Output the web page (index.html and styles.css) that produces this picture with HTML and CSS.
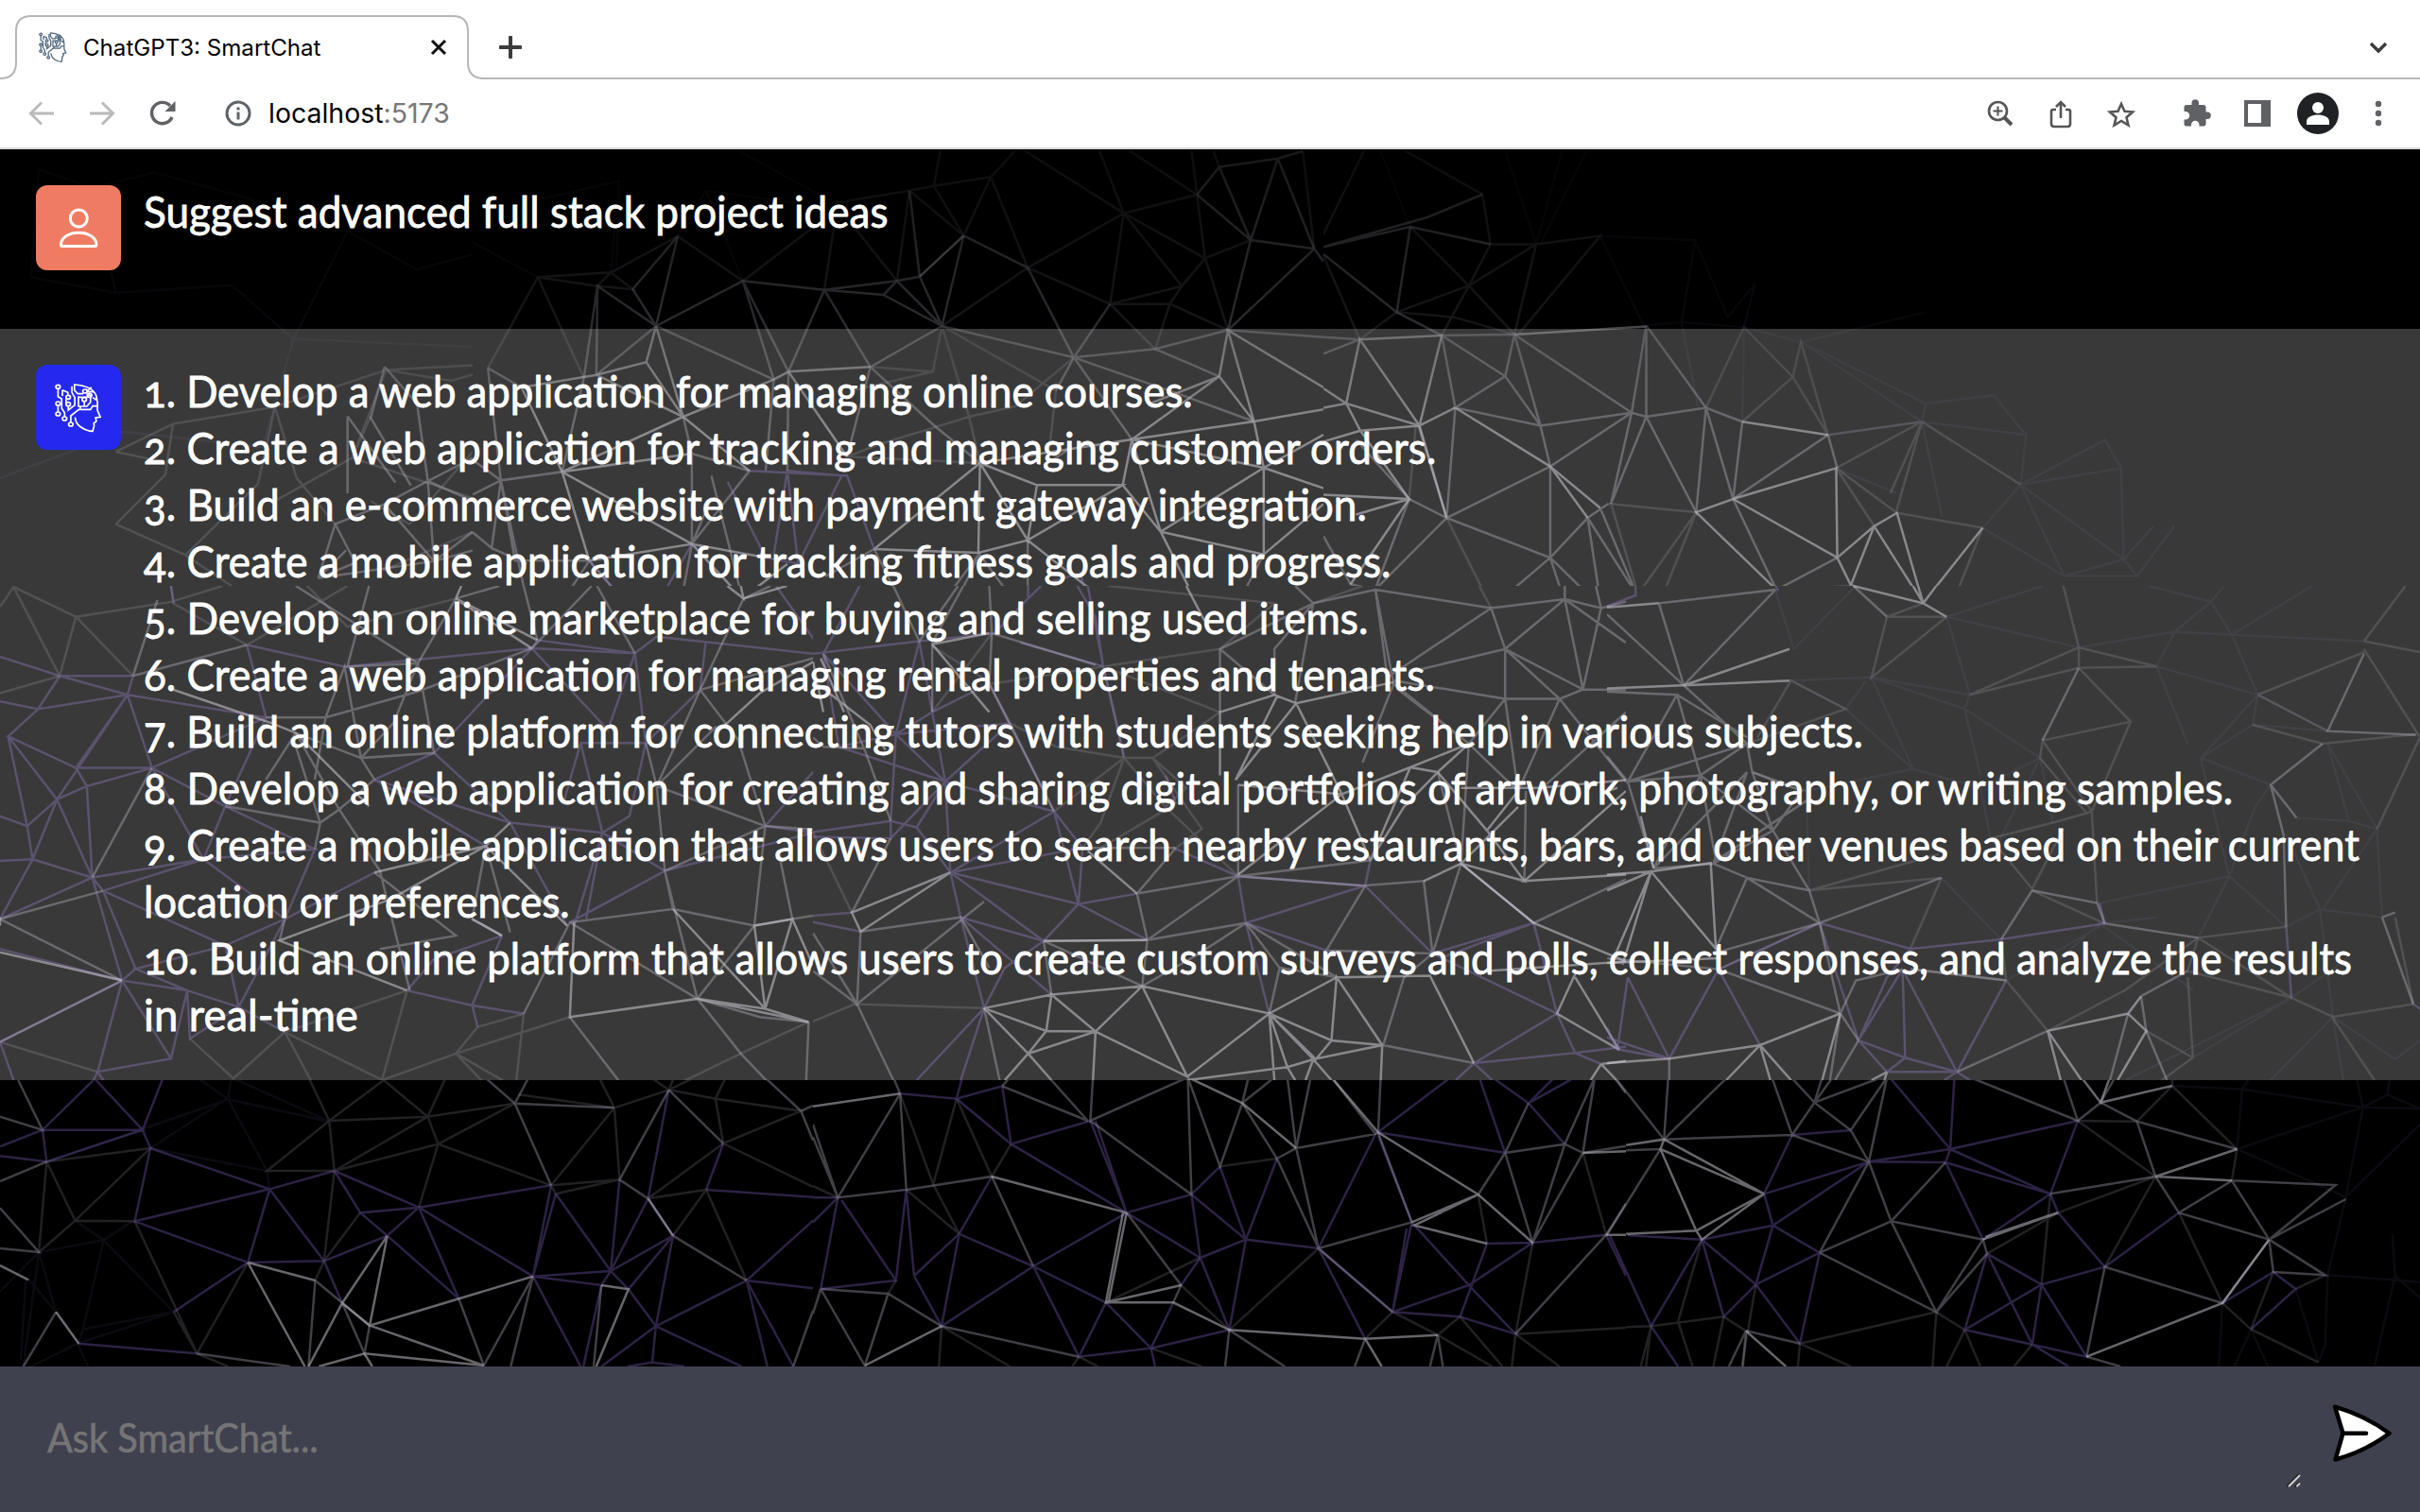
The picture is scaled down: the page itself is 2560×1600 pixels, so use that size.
FILE: index.html
```html
<!DOCTYPE html>
<html lang="en">
<head>
<meta charset="utf-8">
<title>ChatGPT3: SmartChat</title>
<link rel="stylesheet" href="styles.css">
</head>
<body>
<svg class="defs" aria-hidden="true">
  <symbol id="brain" viewBox="95 100 140 165" preserveAspectRatio="none">
    <path d="M156 213 Q157 234 172 244 Q188 257 204 257 L208 240 L207 232 L214 225 L212 214 L225 212 L217 190 Q219 165 214 145 Q204 113 154 109 L154 127 L163 138 L178 138 M147 114 L147 134 L155 150 L155 174 L137 190 L137 177 M144 228 L144 208 L166 188 L198 188 L204 177 L216 177 M109 122 L109 147 L119 154 L119 184 L127 198 L127 211 M121 126 L121 145 M121 126 L136 134 L136 143 M109 175 L109 196 M131 155 L131 172 M165 146 L165 178 L188 178 L198 165 L198 148 M165 149 L190 149 M170 188 L170 180 M181 163 L181 178 M187 130 L201 118 M189 132 L208 132 M204 150 L217 160 M188 142 L204 143"/>
    <ellipse cx="109" cy="116" rx="6" ry="6"/><ellipse cx="109" cy="169" rx="6" ry="6"/><ellipse cx="109" cy="202" rx="6" ry="6"/><ellipse cx="137" cy="149" rx="6" ry="6"/><ellipse cx="137" cy="171" rx="6" ry="6"/><ellipse cx="127" cy="217" rx="6" ry="6"/><ellipse cx="144" cy="235" rx="6" ry="6"/><ellipse cx="183" cy="130" rx="6" ry="6"/><ellipse cx="181" cy="156" rx="6" ry="6"/><ellipse cx="195" cy="143" rx="6" ry="6"/>
  </symbol>
  <linearGradient id="fade-top" x1="0" y1="0" x2="0" y2="1"><stop offset="0" stop-color="#000" stop-opacity=".62"/><stop offset=".55" stop-color="#000" stop-opacity=".38"/><stop offset="1" stop-color="#000" stop-opacity="0"/></linearGradient>
</svg>

<header class="browser">
  <div class="tabstrip">
    <svg class="tab-shape" width="2560" height="84" viewBox="0 0 2560 84"><path d="M0 83 Q17 83 17 66 V33 Q17 17 33 17 H479 Q495 17 495 33 V66 Q495 83 512 83 H2560"/></svg>
    <div class="tab">
      <svg class="favicon"><use href="#brain"/></svg>
      <span class="tab-title"><span class="fit" data-width="251">ChatGPT3: SmartChat</span></span>
      <svg class="tab-close" width="18" height="18" viewBox="0 0 18 18"><path d="M2 2 L16 16 M16 2 L2 16"/></svg>
    </div>
    <svg class="tab-new" width="24" height="24" viewBox="0 0 24 24"><path d="M12 1.5 V22.500 M1.500 12 H22.500"/></svg>
    <svg class="tab-more" width="20" height="14" viewBox="0 0 20 14"><path d="M2 3 L10 11 L18 3"/></svg>
  </div>
  <div class="toolbar">
    <svg class="nav off" width="28" height="26" viewBox="0 0 28 26"><path d="M27 13 H3 M14 1.500 L2.500 13 L14 24.500"/></svg>
    <svg class="nav off fwd" width="28" height="26" viewBox="0 0 28 26"><path d="M1 13 H25 M14 1.500 L25.500 13 L14 24.500"/></svg>
    <svg class="nav reload" width="28" height="28" viewBox="0 0 28 28"><path d="M24 18 A11.200 11.200 0 1 1 22 6"/><path class="solid" d="M27.500 1 V12 H16.500 Z"/></svg>
    <svg class="info" width="28" height="28" viewBox="0 0 28 28"><circle cx="14" cy="14" r="12"/><path d="M14 12.500 V20.500 M14 7.500 V10.500"/></svg>
    <span class="url"><span class="fit" data-width="192">localhost<span class="port">:5173</span></span></span>
    <svg class="tools" width="440" height="50" viewBox="2095 95 440 50">
      <g class="line"><circle cx="2113.500" cy="117.500" r="9.500"/><path d="M2120.500 124.500 L2128 132" stroke-width="4"/><path d="M2113.500 112.500 V122.500 M2108.500 117.500 H2118.500" stroke-width="2"/>
      <path d="M2175 116 H2172 Q2170 116 2170 118 V131 Q2170 134 2173 134 H2187 Q2190 134 2190 131 V118 Q2190 116 2188 116 H2185 M2180 125 V108 M2175 113 L2180 108 L2185 113"/>
      <path d="M2244 110 L2247.500 117.800 L2256 118.500 L2249.500 124.200 L2251.500 132.500 L2244 128 L2236.500 132.500 L2238.500 124.200 L2232 118.500 L2240.500 117.800 Z"/></g>
      <g class="solid"><path d="M2313 111 H2318.500 V109 A3.700 3.700 0 0 1 2326 109 V111 H2331 Q2333.500 111 2333.500 113.500 V118.500 H2335 A3.700 3.700 0 0 1 2335 126 H2333.500 V131 Q2333.500 133.500 2331 133.500 H2326.500 V132 A4.200 4.200 0 0 0 2318 132 V133.500 H2313 Q2310.500 133.500 2310.500 131 V126.500 H2312 A4.200 4.200 0 0 0 2312 118 H2310.500 V113.500 Q2310.500 111 2313 111 Z"/>
      <path fill-rule="evenodd" d="M2374 106 H2402 V134 H2374 Z M2378 110 V130 H2392 V110 Z"/>
      <circle cx="2516" cy="110" r="3.200"/><circle cx="2516" cy="120" r="3.200"/><circle cx="2516" cy="130" r="3.200"/></g>
      <circle cx="2452" cy="120" r="22" fill="#202124"/><circle cx="2452" cy="114" r="6" fill="#fff"/><path fill="#fff" d="M2440 132 V128.500 C2440 119 2464 119 2464 128.500 V132 Z"/>
    </svg>
  </div>
</header>

<main class="chat">
  <!-- Wireframe mesh, split into regions that share the page's coordinates -->
  <svg class="mesh" width="2560" height="1288" viewBox="0 158 2560 1288" aria-hidden="true">
    <svg x="0" y="158" width="500" height="462" viewBox="0 97 306 283" preserveAspectRatio="none">
      <path class="q" d="M25 110 L60 122 L100 112 L165 130 M60 122 L75 190 L150 185 M25 110 L20 180 L75 190 M225 150 L270 175 L306 165 M225 150 L190 220 L150 185 M190 220 L170 290 M190 220 L306 225 M80 280 L170 290 M0 310 L40 295 L80 280"/>
      <path class="c" d="M178 264 L112 275 L75 293 M112 275 L107 308 M75 293 L98 298 M178 264 L167 314 M178 264 L192 310 M178 264 L250 240 M250 240 L292 247 L306 243 M250 240 L228 297 L306 323 M228 297 L240 270 M178 325 L228 297 M250 240 L306 237 M248 370 L306 345 M306 293 L265 340 L240 325 M75 340 L107 308 M75 340 L120 360 L167 314 M120 360 L150 380 M192 310 L217 340"/>
      <path class="b" d="M249 238 L270 262 L277 312 M249 238 L240 271 L266 315 M277 312 L306 297 M277 312 L249 327 L217 340 L206 375 M277 312 L281 364 M277 312 L306 325 M249 327 L281 364 M206 375 L281 364 L306 345 M217 340 L230 365 L206 375 M224 357 L206 375 M281 364 L306 357 M225 270 L225 320 M225 270 L256 313"/>
    </svg>
    <svg x="500" y="158" width="900" height="462" viewBox="0 24 1568 1386" preserveAspectRatio="none">
      <path class="q" d="M490 28 L667 195 M130 180 L270 125 L265 400 M0 320 L120 430 M270 125 L255 415 M430 155 L600 195 L667 195 M430 155 L378 300 M430 155 L498 442"/>
      <path class="c" d="M667 195 L805 155 L850 140 L955 112 M805 155 L782 442 M805 155 L905 298 M955 112 L905 298 M955 112 L1023 400 M955 112 L1000 28 M850 140 L862 28 M850 140 L905 298 M1017 28 L1200 227 M1155 28 L1200 227 M1210 28 L1335 168 L1200 227 M1325 28 L1335 168 M1376 80 L1365 28 M1530 30 L1551 340 M1335 168 L1350 370 M1434 312 L1350 370 M1200 227 L1350 370 M1200 227 L1023 400 M1200 227 L1307 458 M1200 227 L1175 515 M1350 370 L1392 598 M1350 370 L1307 458 M1023 400 L1175 515 M1023 400 L865 585 M1175 515 L1307 458 L1285 515 L1175 515 M1285 515 L1392 598 M1175 515 L1258 658 L1285 515 M665 280 L648 470 M640 255 L498 442 L378 300 M705 275 L782 442 M378 300 L255 415 L295 468 L230 458 L120 430 L28 718 M120 430 L205 750 M120 430 L255 415 L230 458 M865 585 L848 730 L733 715 M865 585 L915 873 L935 1020 M915 873 L750 960 L690 1000 M865 585 L1075 790 L1060 1020 M848 730 L700 790 M1108 685 L1000 840 L915 873 M690 1000 L935 1020"/>
      <path class="b" d="M1335 168 L1376 80 L1484 53 L1530 30 M1376 80 L1434 312 M1484 53 L1434 312 L1392 598 M1335 168 L1434 312 L1551 340 L1484 53 M1551 340 L1392 598 M1551 340 L1568 380 M1023 400 L1108 685 L1175 515 M905 298 L865 585 M905 298 L1023 400 M805 155 L824 428 L782 442 L648 470 L757 486 L782 442 L865 585 L824 428 M757 486 L865 585 M648 470 L498 442 L338 585 L378 300 L295 468 L338 585 L230 458 L205 750 M230 458 L228 740 M648 470 L582 730 L498 442 L555 755 M648 470 L733 715 L865 585 L1108 685 L1258 658 L1392 598 M338 585 L555 755 M338 585 L228 740 M1108 685 L1300 800 L1440 888 M1108 685 L1215 945 M1108 685 L1075 790 M1258 658 L1376 745 M1392 598 L1568 620 M28 718 L52 1075 L0 1120 M28 718 L90 780 M205 750 L165 1048 L52 1075 L0 1010 M388 873 L404 990 M404 990 L510 1045 L404 1277 L404 990 M582 730 L580 1045 M733 715 L690 1000 M555 755 L540 1045 M733 715 L850 900 L935 1020 M1060 1020 L1100 975 M52 1075 L35 1290 L0 1240 M52 1075 L105 1500 M52 1075 L78 1330 L215 1330 M35 1290 L100 1340 M404 1277 L380 1500 M497 1450 L440 1060 M404 1277 L440 1130 M215 1330 L150 1500 M215 1330 L270 1440 M740 1293 L800 1500 M935 1305 L880 1500 M935 1305 L850 1500 M1023 1265 L1023 1450 M1458 1310 L1400 1500 M740 1293 L650 1380 M932 1305 L990 1440"/>
      <path class="a" d="M905 298 L824 428 M338 585 L320 700 L228 740 L90 780 L165 1048 M338 585 L388 873 L555 755 L582 730 L733 715 M582 730 L690 1000 M388 873 L320 700 M228 740 L388 873 L510 1045 M388 873 L165 1048 L404 990 M165 1048 L404 1277 L215 1330 L165 1048 M404 1277 L540 1320 M404 1277 L497 1450 L580 1340 M740 1293 L935 1020 L1040 1090 L1198 1090 L1023 1265 L932 1305 L740 1293 M935 1020 L932 1305 M935 1020 L1023 1265 L1040 1090 M1023 1265 L1160 1450 M1392 598 L1376 745 L1250 830 M1376 745 L1440 888 L1392 598 L1568 780 M1376 745 L1215 945 L1440 888 L1568 850 M1440 888 L1458 1035 L1268 1238 L1198 1090 L1215 945 L1458 1035 L1458 1310 L1268 1238 L1215 945 M1215 945 L935 1020 M1268 1238 L1345 1500 M1458 1310 L1568 1150 M1458 1035 L1568 930 M1458 1035 L1568 1100"/>
      <path class="p" d="M580 1045 L555 1310 M510 1045 L690 1060 L740 1293 M580 1045 L680 1060 L600 1340 L540 1320 M600 1340 L580 1045 M404 1277 L330 1500 M215 1330 L300 1500 M1060 1400 L1120 1370 L1140 1500 M470 1080 L540 1320"/>
    </svg>
    <svg x="1400" y="158" width="900" height="462" viewBox="0 24 1568 1316" preserveAspectRatio="none">
      <path class="q" d="M105 28 L160 258 M335 28 L392 310 M440 28 L392 310 M485 28 L400 310 M510 285 L685 298 L745 530 M685 298 L660 545 M510 285 L590 555 L660 545 L775 560 L795 430 L745 530 M775 560 L880 605 L1110 515 M880 605 L1110 790 L1235 765 L1295 885 L1285 1035 M1110 790 L1103 845 M1285 1035 L1440 900 L1470 985 L1475 1260 L1530 1160 M1475 1260 L1365 1310 M1215 1165 L1365 1310 M660 545 L690 800 M775 560 L772 845 M930 885 L1103 845 M945 985 L1055 1060 M1103 845 L1140 1130 M1285 1035 L1470 985 M1103 845 L1297 885 M1285 1035 L1365 1310 L1500 1310 L1475 1260 L1285 1035 L1215 1165 M880 605 L1103 845 M1500 1310 L1568 1160"/>
      <path class="c" d="M75 28 L0 280 M150 28 L293 160 L308 310 L392 310 L510 285 L360 580 M160 258 L268 435 L308 310 M392 310 L268 435 L135 515 M268 435 L352 582 M268 435 L218 585 M392 310 L352 582 M135 515 L240 530 L352 582 M135 515 L67 597 L0 345 M705 803 L775 560 L865 710 L772 845 M865 710 L930 885 L880 605 L865 710 M1103 845 L930 885 M945 985 L1103 845 L1285 1035 M1103 845 L1045 1060 M1055 1120 L1103 845 M1215 1165 L1057 1120 M945 985 L1057 1120 M945 985 L1015 1160 M687 1118 L580 1365 M687 1118 L620 1390 M530 1092 L580 1365 M525 1092 L687 1118 M227 1135 L310 1405 M158 1078 L170 860 M1215 1165 L1150 1432 M835 1352 L970 1340"/>
      <path class="b" d="M0 318 L160 258 L308 310 M0 318 L190 230 L293 160 M160 258 L135 515 L0 340 M135 515 L218 585 L352 582 L335 708 L243 803 L400 857 L352 582 L568 818 L595 555 L595 830 M218 585 L335 708 L400 857 L568 818 L595 830 L705 803 L772 845 M218 585 L243 803 L227 1135 L418 980 L568 818 L530 1092 L595 830 L687 1118 L705 803 L755 1078 L772 845 M595 555 L705 803 M400 857 L418 980 L418 1255 L227 1135 L158 1078 L60 900 M418 1255 L487 1135 L525 1092 M487 1135 L512 1405 M487 1135 L577 1365 L510 1105 M418 1255 L310 1405 M418 1255 L512 1405 M418 1255 L443 1380 M930 885 L755 1078 L835 1352 M930 885 L947 985 M835 1352 L947 1255 M227 1135 L95 1352 L158 1078 M227 1135 L175 857 M0 590 L67 597 L0 640 M0 1190 L50 1335 L95 1352 M0 1385 L95 1352"/>
      <path class="a" d="M67 597 L218 585 L177 857 L67 597 L42 790 L177 857 L243 803 M352 582 L595 558 M0 745 L42 790 L0 803 M42 790 L68 872 L177 857 M68 872 L0 905 M68 872 L158 1078 L0 1065 M158 1078 L50 1335 M158 1078 L60 1125 M177 857 L227 1135 M243 803 L418 980 M772 845 L930 885 M755 1078 L945 985 L947 1255 L755 1078 L687 1118 L835 1352 M947 1255 L972 1338 L1015 1160 L947 1255 M1015 1160 L1057 1120 L1105 1392 L1015 1160 M972 1338 L1105 1392 L1215 1165 M487 1135 L418 980 L510 1105"/>
    </svg>
    <rect x="0" y="158" width="2560" height="300" fill="url(#fade-top)"/>
    <svg x="0" y="620" width="860" height="523" viewBox="0 57 1498 1488" preserveAspectRatio="none">
      <path class="c" d="M25 60 L140 150 L315 105 L410 57 M140 150 L110 328 L25 60 L0 120 M140 150 L245 328 M315 57 L320 110 M320 110 L455 235 M0 380 L110 328 M840 95 L640 180 L550 30 M0 1430 L180 1520 M525 1400 L430 1540 L350 1420 M525 1400 L580 1568 M525 1400 L750 1275 M750 1275 L700 1568 M840 1465 L705 1545 L525 1400 M840 1465 L880 1385 L965 1345 M965 1345 L950 1568 L840 1465 M1050 1355 L840 1465 L900 1568 M1365 1465 L1235 1568 M1365 1465 L1490 1370 M455 235 L640 57"/>
      <path class="p" d="M0 270 L110 328 L245 328 L235 385 L110 328 L70 428 L235 385 L490 453 L280 605 L235 385 L140 605 L280 605 L160 660 L140 605 L15 510 L70 428 L0 405 M15 510 L105 700 L160 660 L170 935 L105 700 L50 780 L15 510 M105 700 L235 385 M105 700 L60 880 L50 780 L0 750 M60 880 L170 935 L375 880 L320 720 L280 605 L415 720 L580 850 L375 880 L190 975 L170 935 L0 1060 M60 880 L0 1060 M60 880 L0 885 M190 975 L250 1210 L225 1245 L170 935 M375 880 L525 1060 L415 1140 L250 1210 L345 1275 L440 1325 L415 1140 L190 975 M525 1060 L440 1325 M345 1275 L225 1245 L180 1520 L315 1480 L345 1275 L350 1420 L440 1325 L525 1400 M315 1480 L225 1245 M580 850 L525 1060 L690 920 M415 720 L375 880 M870 1320 L750 1275 M870 1320 L965 1345 M925 1110 L870 1320 L880 1385 M1050 1070 L1225 915 L1110 800 L1160 750 L1190 530 L1070 530 L1110 800 L1060 1070 M940 770 L1110 800 M940 770 L1045 1080 M690 640 L940 770 M690 640 L800 560 L940 770 M690 640 L895 840 M800 560 L980 245 L1170 260 L1120 490 L980 245 L990 220 L1170 260 L1190 530 M1170 260 L1210 210 L1520 265 L1430 57 M1190 530 L1290 370 M455 235 L635 300 L980 245 M455 235 L490 453 M415 720 L490 453 M925 1110 L800 1180 L750 1275 M1110 800 L1080 1060 M320 110 L315 57 M1540 540 L1410 780 L1498 800 M1300 230 L1290 370 M30 1568 L0 1430 L225 1245 M1225 915 L1498 800 M1070 530 L1040 700 M180 1520 L165 1568 M180 1520 L200 1568 M0 1150 L225 1245"/>
      <path class="b" d="M245 328 L290 100 M245 328 L455 235 M840 95 L770 290 L545 57 M770 290 L640 300 L680 57 M770 290 L725 470 L665 575 L545 500 M840 95 L920 57 M965 57 L990 220 M1090 57 L980 245 M1100 57 L1170 260 M490 453 L600 453 L635 300 L665 575 L800 560 L770 290 M600 453 L770 375 L980 245 M600 453 L580 640 M545 500 L625 730 L590 770 L415 720 M545 540 L590 770 L580 850 M545 500 L490 640 M665 575 L690 640 L625 730 L700 915 L755 1275 M170 935 L280 605 M0 1060 L190 975 M0 1060 L225 1245 M0 1430 L225 1245 M690 920 L840 1110 L700 1150 M895 840 L870 1060 L925 1110 M895 840 L940 1100 M965 1345 L1050 1070 L1240 1030 L1225 915 L1285 1300 M1050 1070 L1285 1300 M1240 1030 L1390 1080 L1460 1060 L1435 860 M1410 780 L1390 1080 L1285 1300 M1225 915 L1410 780 L1498 790 M1410 780 L1210 660 M1225 915 L1210 660 L1190 530 M1210 660 L1290 370 L1520 265 M1320 480 L1210 660 M1290 370 L1360 520 L1410 780 M1050 1355 L1150 1568 M1490 1370 L1485 1568 M1365 1465 L1425 1568 M1285 1300 L1365 1465 M1285 1300 L1400 1355 L1490 1370 M515 1125 L525 1060 M1420 57 L1370 95 L1290 370 M1460 1060 L1498 1050"/>
      <path class="a" d="M840 95 L990 220 M848 105 L980 245 M840 95 L850 57 M690 920 L895 840 L720 1000 L515 1125 L750 1275 M545 500 L500 470 L320 370 M545 500 L680 720 M895 840 L1045 1080 M870 1060 L925 1110 M940 770 L895 840 M1058 1070 L1050 1355 L1285 1300 L1410 1330 L1240 1030 M1410 1330 L1460 1060 L1390 1080 L1410 1330 L1490 1370 L1285 1300 M1460 1060 L1498 1200 M0 1160 L225 1245 M0 1055 L0 1080 M1340 57 L1370 95 L1365 57 M1370 95 L1450 57 M1520 265 L1400 380 L1320 500"/>
    </svg>
    <svg x="860" y="620" width="860" height="523" viewBox="0 0 1568 1566" preserveAspectRatio="none">
      <path class="c" d="M965 55 L1060 0 M1285 0 L1308 70 M785 200 L560 255 M560 255 L785 400 M785 200 L890 55 L570 0 M345 150 L230 400 M345 310 L230 190 M345 310 L560 255 M600 545 L470 510 L380 435 M600 545 L555 750 L520 830 M600 545 L680 700 L820 920 M655 545 L720 640 L680 700 M700 830 L750 770 L655 545 M555 830 L700 690 M785 400 L715 480 L655 545 L600 545 L560 255 M600 545 L465 715 M0 780 L75 1035 M0 1380 L80 1325 L330 1338"/>
      <path class="p" d="M0 215 L205 175 L350 150 M205 175 L160 470 L230 400 L205 175 M160 470 L50 510 L20 215 L160 470 L255 620 L50 510 M160 470 L150 745 L0 780 M150 745 L200 765 L255 620 M255 620 L150 800 M150 745 L150 800 L0 795 M200 765 L265 908 L255 620 L380 435 L340 310 L230 400 M560 255 L530 0 M560 255 L545 100 L510 0 M560 255 L400 180 M560 255 L585 430 L600 545 M230 400 L255 620 L465 715 L380 435 L160 470 M465 715 L520 830 L265 908 L465 715 M520 830 L512 1008 L445 1125 L265 908 L285 1050 L445 1125 M512 1008 L645 1122 M265 908 L512 1008 L625 975 M285 1050 L330 1338 M285 1050 L460 1295 M0 1045 L75 1035 M0 1065 L92 1095 M330 1338 L200 1566 M330 1338 L285 1566 M465 715 L512 1008 M820 920 L835 1068 L880 1355 M835 1068 L990 1155 M835 1068 L1065 950 L1075 870 M1065 950 L1195 1165 L1390 1068 L1250 880 M1065 950 L820 920 M1195 1165 L1435 1355 L1275 1512 L1470 1480 L1435 1355 L1390 1068 L1210 1180 M1470 1480 L1568 1460 M1470 1480 L1520 1515 M1275 1512 L1240 1566 M1275 1512 L1310 1566 M445 1125 L370 1210 L330 1338 M90 0 L20 215 M415 0 L415 40 L350 150 M415 40 L440 0 M695 830 L820 920 M700 690 L680 600"/>
      <path class="b" d="M155 0 L205 175 L280 0 M290 0 L230 180 L230 400 M345 150 L340 310 L465 715 M340 0 L345 150 L545 250 M785 400 L785 200 L965 55 L1085 12 L1308 70 L1450 42 L1520 70 L1568 50 M1085 12 L1120 310 M1085 12 L1108 290 L1308 70 L1335 200 L1450 42 L1485 328 L1335 200 L1170 265 M1335 200 L1335 358 L1120 300 M1335 200 L1440 358 L1335 358 L1265 500 M1440 358 L1568 620 M1440 358 L1485 328 L1568 330 M1520 70 L1485 328 M1450 0 L1450 42 L1568 180 M1510 0 L1520 70 M965 55 L930 370 M965 55 L890 200 L890 345 M785 200 L890 345 M965 55 L930 0 M1120 310 L1265 500 L1130 330 M1120 310 L1060 560 M1440 358 L1360 650 L1265 500 L1250 880 M1568 400 L1400 650 M1335 358 L1360 650 M820 920 L1075 870 M820 920 L1060 950 L1178 935 L1195 1165 L990 1155 L1065 950 M820 920 L645 1122 L625 975 L820 920 M820 630 L820 920 M625 975 L645 1122 L445 1125 L635 1268 L645 1122 L835 1068 M700 830 L520 830 M700 830 L625 975 M92 1095 L285 1050 L340 1210 M92 1095 L85 1325 L330 1000 M85 1325 L0 1100 M85 1325 L155 1566 M85 1325 L0 1220 M75 1035 L150 800 M445 1125 L460 1295 M1010 1240 L900 1210 L835 1068 L1010 1240 M835 1068 L740 1170 L635 1268 M880 1355 L900 1210 M1250 880 L1195 1165 M1195 1165 L1140 1240 L1100 1455 M1275 1512 L1100 1455 M1250 880 L1390 1068 L1568 930 M1205 590 L1250 880 M1375 650 L1372 935 M330 1338 L360 1566 M0 480 L20 510 L100 515 M20 215 L100 520 L150 745"/>
      <path class="a" d="M0 240 L20 400 M0 300 L110 440 L140 520 M15 230 L60 400 M720 0 L755 110 M785 600 L785 400 L890 345 L932 372 L1120 305 M932 372 L815 615 L895 350 M932 372 L1020 660 L1152 575 L1265 500 M1152 575 L1205 590 L1265 500 M1205 590 L1140 700 L1075 870 L1152 575 M1205 590 L1300 775 L1372 935 L1250 880 L1178 935 M820 630 L1020 660 L820 915 M1020 660 L1075 870 M1250 640 L1400 640 L1568 615 M1568 650 L1372 935 L1568 915 M1300 775 L1360 650 M265 908 L75 1035 L92 1095 L265 908 M445 1125 L645 1122 M1250 880 L1390 1068 L1568 1190 M1300 1220 L1568 1190 M1250 880 L1360 700 M230 185 L340 150 M230 185 L340 400 M530 840 L625 975 M330 1338 L460 1295 L635 1268 L880 1355 L1010 1240 L1190 1235 L1275 1512 M330 1338 L450 1410 L545 1412 L460 1295 L450 1410 L415 1482 L330 1338 M415 1482 L545 1412 L722 1555 L635 1268 L545 1412 L540 1566 M415 1482 L370 1566 M415 1482 L460 1566 M722 1555 L880 1355 L1000 1440 L1098 1455 L965 1500 L880 1355 L915 1525 L722 1566 M880 1355 L970 1500 L1000 1440 L1010 1240 L1098 1455 L1095 1566 M965 1500 L950 1566 M965 1500 L1000 1566 M880 1355 L890 1566 M915 1525 L965 1500 M915 1525 L930 1566 M1520 1515 L1568 1505 M1520 1515 L1500 1566 M1520 1515 L1550 1566 M1470 1230 L1435 1355 L1555 1470 L1470 1240"/>
    </svg>
    <svg x="1700" y="620" width="860" height="523" viewBox="0 0 1568 1566" preserveAspectRatio="none">
      <path class="q" d="M1165 50 L1095 145 L1205 155 L1165 50 L1045 0 M1165 50 L1190 0 M1205 155 L1360 0 M1205 155 L1460 175 M1205 155 L1255 345 M910 195 L1095 145 L1060 255 L1255 345 L1390 460 L1245 440 L1255 345 L1145 545 L1245 440 M1145 545 L1280 630 M1145 545 L1200 920 L1250 700 L1280 630 M1200 920 L1140 1115 M1200 920 L950 1005 M1200 920 L1310 1080 L1375 1025 L1495 1050 M1375 1025 L1310 790 M1375 1025 L1400 1365 M1390 500 L1485 770 L1495 1050 M1430 740 L1390 500 M1330 735 L1430 745 L1485 770 M1485 770 L1380 1025 M1060 255 L1120 500 M510 290 L700 345 L690 390 L510 290 L355 300 M690 390 L720 600 M700 345 L690 390 L835 545 M655 98 L910 195 M655 98 L700 345 M655 98 L840 0 M590 580 L385 650 M590 580 L510 290 M590 580 L720 640 M835 545 L720 640 L740 800 M835 545 L860 750 M385 700 L390 965 M835 545 L750 830 M950 1070 L1130 1280 M1320 1305 L1430 1180 M1320 1305 L1130 1495 M1400 1365 L1280 1566 M1400 1365 L1420 1566 M1400 1365 L1520 1500 L1568 1440 M1060 1050 L950 1070 L860 1200 M645 925 L760 1120 M360 200 L480 0 M355 300 L460 390 L500 300 L460 390 L590 580 M360 200 L325 15 M770 1250 L960 1070 M1000 1566 L1320 1305"/>
      <path class="c" d="M540 98 L510 290 L655 98 M540 98 L610 55 M540 98 L655 98 M910 260 L1060 255 L910 195 L880 0 M910 195 L910 260 L700 345 L910 195 M840 490 L1010 430 L910 260 M1010 430 L935 715 L840 490 L835 545 L925 720 L860 750 L935 715 L945 1005 M860 750 L740 800 L820 960 L880 770 M960 1070 L820 965 M1140 1115 L1310 1080 M1140 1115 L1120 1220 M1140 1115 L1320 1305 L1120 1220 M1320 1305 L1400 1365 L1555 1325 M1255 345 L1460 210 M1460 175 L1568 210 M1460 175 L1540 0 M1485 770 L1568 480 M1460 200 L1568 480 M270 500 L460 390 L355 300 L290 480 M390 965 L645 925 M390 965 L640 850 M645 925 L585 1150 M760 1120 L770 1250 L850 1410 M600 1215 L770 1250 M1130 1495 L1120 1240 M1130 1495 L1040 1410 M1130 1495 L1070 1566 M1555 1325 L1520 1050 M215 1215 L410 1068 M385 650 L280 590 M1400 1370 L1480 1566 M850 1410 L1000 1280 L1140 1115 M1245 440 L1380 500 L1560 470 M1255 345 L1390 460"/>
      <path class="p" d="M410 1068 L585 1150 L760 1120 L960 1070 M410 1068 L485 1440 L540 1540 M215 1215 L410 1068 L585 1150 L540 1240 L485 1440 L575 1495 L675 1540 L540 1540 M570 1215 L675 1540 M570 1215 L575 1495 L540 1540 M570 1215 L485 1440 M215 1215 L120 1498 L20 1468 L0 1400 M40 1240 L20 1468 M40 1240 L120 1498 M215 1215 L295 1455 M120 1498 L0 1430 M675 1540 L700 1566 M770 1250 L675 1540 M55 0 L55 30 L0 65 M325 0 L330 15 M960 1070 L950 1005 M675 1540 L650 1566 M1320 1305 L1310 1080 M1555 1325 L1568 1340"/>
      <path class="b" d="M100 55 L325 12 M100 55 L148 315 L0 90 M148 315 L325 12 M148 315 L270 500 L280 590 L320 775 L180 600 L270 500 L40 620 L135 345 L0 335 M135 345 L270 480 M135 345 L180 600 L210 870 L385 680 M0 540 L40 620 L90 895 M40 620 L180 600 M180 600 L90 895 L270 590 L205 880 L320 775 L390 965 L410 1068 L215 1160 M320 775 L375 650 L280 590 M205 880 L270 925 L390 965 M270 925 L410 1068 L645 925 M270 925 L210 1150 M410 1068 L450 1355 L215 1215 L0 1180 M205 880 L90 895 M475 0 L540 98 M960 1070 L1140 1115 M760 1120 L820 965 M820 965 L945 1005 L960 1070 M910 260 L840 490 M1380 500 L1280 630 L1305 790 L1310 1080 M1280 630 L1330 735 M1460 215 L1390 460 L1560 472 M1495 1050 L1555 1325 M1495 1050 L1520 1035 M450 1355 L480 1250 L570 1215 M585 1215 L770 1250 M450 1355 L430 1566 M450 1355 L485 1440 M675 1540 L850 1410 M1030 1300 L1120 1220 M1005 1355 L970 1566 M1030 1300 L1040 1410 L1080 1566 M120 1498 L120 1566 M485 1440 L440 1566"/>
      <path class="a" d="M0 68 L100 55 M148 315 L352 200 M0 325 L148 315 L352 300 M475 0 L610 55 L655 98 M590 0 L610 55 L600 0 M610 55 L635 0 M0 915 L85 905 L200 878 L210 1150 L85 905 L10 1190 M85 905 L30 1200 M85 905 L0 965 M0 1195 L215 1180 M0 650 L20 640 M65 730 L90 895 M0 1512 L120 1498 L295 1455 L450 1355 M295 1455 L230 1566 M295 1455 L315 1566 M295 1455 L355 1566 M450 1355 L415 1566 M850 1410 L1005 1355 L1030 1300 M1005 1355 L1040 1410 L985 1566 M850 1410 L875 1566 M850 1410 L915 1566 M540 1540 L510 1566 M540 1540 L535 1566"/>
    </svg>
    <svg x="0" y="1143" width="860" height="303" viewBox="0 9 1568 909" preserveAspectRatio="none">
      <path class="q" d="M445 9 L440 70 L635 140 M440 70 L275 165 M380 0 L440 70 L515 297 M445 60 L290 225 M90 268 L440 70 M515 297 L520 355 M290 225 L515 297 M145 455 L200 517 L255 457 M200 517 L335 745 L150 845 L108 745 M200 517 L160 800 M335 745 L160 800 L150 845 M55 640 L108 745 L75 555 L45 918 M0 680 L75 555 M50 640 L40 900 M75 555 L200 517 M150 845 L170 918 M150 845 L60 918 M445 0 L635 140"/>
      <path class="p" d="M180 9 L82 167 L275 167 L180 0 M82 167 L90 268 L0 250 M315 0 L275 167 L290 225 L260 457 L520 355 L290 225 M0 220 L82 167 M90 268 L275 167 M260 457 L478 588 M520 355 L478 588 L335 745 M520 355 L625 583 M520 355 L645 297 L695 430 L808 413 L645 297 M695 430 L747 503 L885 703 L808 413 L747 503 L625 583 L660 717 M808 413 L1063 343 L1028 632 L808 413 M1072 370 L1028 632 L1178 615 L1072 370 M1178 615 L1298 503 L1250 385 M1028 632 L1160 660 L1178 615 L1212 673 L1298 503 L1265 790 L1212 673 M1028 632 L1120 918 M1160 660 L1125 918 M1265 790 L1440 645 L1568 455 M1440 645 L1568 670 M1362 357 L1568 380 M1362 357 L1395 210 M1265 790 L1430 918 M1265 790 L1258 905 L1210 918 M1265 790 L1160 918 M1440 645 L1480 918 M1440 645 L1530 918 M150 845 L380 877 M1195 325 L1178 615 M1250 385 L1178 615 M1258 905 L1320 918 M478 588 L625 583 M1290 40 L1250 385"/>
      <path class="c" d="M740 9 L825 125 L845 212 L808 413 M740 9 L635 138 L515 297 L645 297 L635 138 L825 125 L645 297 L845 212 L993 83 L825 125 L860 0 M595 0 L635 138 M845 212 L1063 343 M645 297 L625 583 L695 430 M145 455 L260 457 L380 877 L478 588 M145 455 L90 268 L290 225 L145 455 L75 555 L90 268 M1063 343 L1195 325 L1072 370 L1063 343 M1195 325 L1185 97 L1000 55 M1185 97 L1063 343 M1290 40 L1185 97 L1155 0 M1290 40 L1300 0 M1290 40 L1380 68 L1400 0 M1380 68 L1395 210 L1545 107 L1380 68 M1395 210 L1568 348 M1395 210 L1250 385 L1362 357 L1298 503 M335 745 L380 877 M608 645 L625 583 M1440 645 L1362 357 M380 877 L440 918 M1290 40 L1255 0 M1290 40 L1340 0 M515 297 L645 297"/>
      <path class="b" d="M0 125 L82 167 L35 9 M0 330 L90 268 M0 415 L75 555 L0 543 M935 0 L993 83 L1185 97 M993 83 L1020 0 M993 83 L1063 343 M1290 40 L1195 325 L1250 385 M1290 40 L1395 210 M1298 503 L1440 645 M608 645 L595 918 M608 645 L713 788 L703 877 L660 717 M885 703 L933 915 L1028 632 L985 918 M1160 660 L1145 918 M108 745 L45 918 M380 877 L560 918 M1475 0 L1545 107 L1568 90 M1545 107 L1568 200 M1568 740 L1530 918"/>
      <path class="a" d="M0 597 L55 643 M108 745 L152 845 M478 588 L608 645 M478 588 L588 918 M747 503 L660 717 L595 918 M747 503 L713 788 L1028 632 M713 788 L933 915 L703 877 L615 918 M703 877 L718 918 M1250 385 L1298 503 M1160 660 L1212 673 L1150 918 M660 717 L713 788"/>
    </svg>
    <svg x="860" y="1143" width="860" height="303" viewBox="0 9 1568 909" preserveAspectRatio="none">
      <path class="p" d="M168 52 L277 68 L288 0 M277 68 L382 212 L365 28 L277 68 M382 212 L535 138 L605 430 L382 212 M545 138 L605 430 L730 372 L785 283 M605 430 L747 573 L730 372 L835 515 L895 258 M835 515 L747 573 L803 802 L835 515 L975 543 M785 283 L835 515 M747 573 L710 660 M0 382 L48 382 L0 460 M48 382 L15 672 L160 645 L55 390 M180 357 L160 645 M180 357 L195 630 L248 790 L282 497 L195 630 M282 497 L345 315 M282 497 L425 600 L248 790 M425 600 L605 430 M425 600 L513 887 L565 715 L425 600 M565 715 L652 860 L513 887 M652 860 L695 715 M975 543 L1085 180 L1230 0 M1090 175 L1335 240 L1285 0 M1090 185 L1155 460 L1118 745 L1265 660 L1155 460 M1145 480 L1118 745 L1248 760 L1300 528 L1388 525 L1265 660 L1355 815 L1248 760 M975 543 L1065 830 M975 543 L1118 745 M1310 0 L1380 82 L1450 212 M1380 82 L1470 0 M1380 82 L1430 0 M1388 525 L1530 500 L1568 630 M652 860 L660 918 M652 860 L803 802"/>
      <path class="c" d="M277 68 L232 340 M277 68 L345 315 L382 212 M180 357 L282 497 L232 340 M168 52 L232 340 M160 645 L145 687 M248 790 L243 918 M248 790 L380 918 M652 860 L750 918 M565 715 L747 573 M710 660 L803 802 L975 543 M1065 830 L1118 745 L1205 818 L1248 760 L1330 918 M1205 818 L1310 918 M1355 815 L1388 525 M1355 815 L1348 918 M1355 815 L1440 918 M1355 815 L1568 795 M1300 528 L1283 372 M513 887 L500 918 M513 887 L550 918 M785 283 L895 258 M1530 500 L1485 240 M0 345 L48 382"/>
      <path class="b" d="M168 52 L48 382 L0 150 M48 382 L0 190 M168 52 L180 357 L48 382 M168 52 L155 0 M180 357 L345 315 L425 600 M365 28 L380 0 M455 0 L530 138 L365 28 M540 0 L535 138 L723 0 L730 372 L535 138 M723 0 L785 283 L828 82 L895 258 L975 543 L932 225 L895 258 M932 225 L1085 180 L1000 0 M1095 0 L1090 175 L1155 460 M915 0 L932 225 L960 0 M605 430 L710 660 L695 715 M828 82 L840 0 M828 82 L890 0 M975 543 L1155 460 M1335 240 L1388 525 L1450 212 L1335 240 L1283 372 M1335 240 L1380 82 M1450 212 L1508 0 L1485 240 L1388 525 M1450 212 L1485 240 M1530 500 L1355 815 M1530 500 L1568 400 M15 672 L145 687 L248 790 M15 672 L0 750 M15 672 L100 915 L145 687 M248 790 L513 887 M803 802 L795 918 M803 802 L910 918 M1065 830 L1045 918 M1205 818 L1190 918 M1205 818 L1215 918 M1485 240 L1568 218 M1545 0 L1568 50 M975 543 L1118 745"/>
      <path class="a" d="M0 92 L168 52 M345 315 L605 430 M598 430 L565 715 L710 660 M605 430 L570 715 L695 715 L803 802 L1065 830 L1205 818 M1065 830 L1097 918 M248 790 L100 915 M723 0 L828 82 L932 225 M1000 0 L1090 175 L1283 372 L1388 525 M1283 372 L1155 460 L1283 372 L1160 470 L1300 528 M1485 240 L1568 235 M1530 500 L1568 500"/>
    </svg>
    <svg x="1700" y="1143" width="860" height="303" viewBox="0 9 1568 909" preserveAspectRatio="none">
      <path class="q" d="M1090 27 L1225 38 L1240 0 M1225 38 L1458 95 L1505 55 L1510 0 M1505 55 L1568 100 L1458 95 L1215 228 M1225 38 L1215 228 L1425 380 L1458 95 L1445 0 M1568 150 L1425 380 L1390 628 M1390 628 L1568 650 M1520 630 L1480 918 M1520 630 L1568 700 M1328 672 L1372 905 M1390 628 L1385 850 L1372 905 M1242 800 L1210 918 M1242 800 L1275 918 M1187 717 L1180 918 M1520 630 L1515 500"/>
      <path class="p" d="M545 0 L662 228 L670 0 M662 228 L855 370 L653 270 L505 268 L662 228 L653 270 L725 515 L855 370 L870 430 M662 228 L908 138 L855 370 M303 370 L357 183 M303 370 L505 268 L320 470 L303 370 M320 470 L183 515 L287 658 L410 557 L320 470 L287 658 L372 845 L410 557 M183 515 L85 790 M183 515 L225 760 L287 658 M40 502 L183 515 M5 500 L85 790 L137 918 M733 560 L838 658 L690 802 L733 560 M838 658 L820 848 L690 802 M838 658 L960 602 L870 430 M838 658 L925 887 L820 848 L890 918 M960 602 L1103 430 M1187 717 L1285 618 L1328 672 L1242 800 M357 183 L470 168 M733 560 L820 848"/>
      <path class="c" d="M1090 27 L1215 228 M1090 0 L1090 27 L1022 140 L908 138 L1058 315 M1058 315 L870 430 M1058 315 L960 602 M1103 430 L1187 717 L1242 800 L1372 905 M1242 800 L1285 618 M1328 672 L1385 628 M85 790 L225 760 L268 805 M372 845 L635 745 M372 845 L470 918 M372 845 L368 918 M635 745 L690 802 L720 918 M690 802 L655 918 M635 745 L628 918 M85 790 L65 918 M85 790 L75 918 M137 775 L165 918 M137 775 L183 515 M225 760 L205 918 M287 658 L260 918 M1215 228 L1205 328 M37 793 L85 790 M820 848 L785 918 M733 560 L870 430 M855 370 L838 658"/>
      <path class="b" d="M15 0 L110 197 L118 0 M110 197 L232 0 M318 0 L357 183 L400 80 L415 0 M355 0 L400 80 L470 168 L540 0 L505 268 L470 168 M400 80 L435 0 M505 268 L357 183 L110 197 M400 80 L530 0 M410 557 L505 268 L548 457 L653 270 M410 557 L548 457 L635 745 L410 557 M548 457 L725 515 L635 745 L733 560 L725 515 M700 0 L908 138 L880 0 M908 138 L952 80 L1022 140 L1058 315 L855 370 M1022 140 L1215 228 M1058 315 L1103 430 L1205 328 L1277 515 L1285 618 M1103 430 L1277 515 L1187 717 L960 602 L925 887 M1277 515 L1405 342 L1205 328 M1277 515 L1385 628 L1285 618 M1277 515 L1425 387 M268 805 L372 845 M268 805 L235 918 M268 805 L262 918 M103 228 L37 232 M0 500 L103 228 M980 0 L952 80 M925 887 L990 918"/>
      <path class="a" d="M37 215 L110 197 L103 228 L303 370 L110 197 M37 497 L172 487 L103 228 M172 487 L303 370 L183 515 L172 487 M725 515 L870 430 M730 507 L868 430 M915 0 L952 80 L970 0 M952 80 L1090 27 M1058 315 L1215 228 M1058 315 L1205 328 M925 887 L1187 717 L1277 515 M268 805 L345 918"/>
    </svg>
  </svg>

  <section class="message user">
    <div class="avatar"><svg width="42" height="44" viewBox="62 219 42 44"><circle cx="83.300" cy="231" r="9"/><path d="M64.500 259 C64.500 242 102 242 102 259 Q102 260.500 100.500 260.500 H66 Q64.500 260.500 64.500 259 Z"/></svg></div>
    <div class="text"><p><span class="fit" data-width="787">Suggest advanced full stack project ideas</span></p></div>
  </section>
  <section class="message bot">
    <div class="avatar"><svg class="brain"><use href="#brain"/></svg></div>
    <div class="text">
      <p><span class="fit" data-width="1110">1. Develop a web application for managing online courses.</span></p>
      <p><span class="fit" data-width="1367">2. Create a web application for tracking and managing customer orders.</span></p>
      <p><span class="fit" data-width="1294">3. Build an e-commerce website with payment gateway integration.</span></p>
      <p><span class="fit" data-width="1319">4. Create a mobile application for tracking fitness goals and progress.</span></p>
      <p><span class="fit" data-width="1295">5. Develop an online marketplace for buying and selling used items.</span></p>
      <p><span class="fit" data-width="1366">6. Create a web application for managing rental properties and tenants.</span></p>
      <p><span class="fit" data-width="1819">7. Build an online platform for connecting tutors with students seeking help in various subjects.</span></p>
      <p><span class="fit" data-width="2210">8. Develop a web application for creating and sharing digital portfolios of artwork, photography, or writing samples.</span></p>
      <p><span class="fit" data-width="2344">9. Create a mobile application that allows users to search nearby restaurants, bars, and other venues based on their current</span></p>
      <p><span class="fit" data-width="451">location or preferences.</span></p>
      <p><span class="fit" data-width="2336">10. Build an online platform that allows users to create custom surveys and polls, collect responses, and analyze the results</span></p>
      <p><span class="fit" data-width="227">in real-time</span></p>
    </div>
  </section>
</main>

<form class="prompt">
  <span class="placeholder"><span class="fit" data-width="287">Ask SmartChat...</span></span>
  <svg class="grip" width="16" height="16" viewBox="0 0 16 16"><path class="shade" d="M0 14 L13 1 M8.500 14.500 L13.500 9.500"/><path d="M2 14 L14 2 M10.500 14 L14 10.500"/></svg>
  <svg class="send" width="66" height="66" viewBox="2466 1484 66 66"><path d="M2470 1488.700 Q2502 1498 2527.500 1516.700 Q2502 1536 2470.500 1544.500 L2478.500 1516.700 Z M2478.500 1516.700 H2503"/></svg>
</form>
<script src="fit.js"></script>
</body>
</html>
```
FILE: styles.css
```css
* { box-sizing: border-box; }
body { margin: 0; width: 2560px; height: 1600px; overflow: hidden; display: flex; flex-direction: column; background: #000; font-family: Inter, "Liberation Sans", sans-serif; }
svg { display: block; flex: none; }
.defs { position: absolute; width: 0; height: 0; }
.fit { display: inline-block; white-space: nowrap; transform-origin: 0 50%; }

.browser { height: 158px; flex: none; background: #fff; border-bottom: 2px solid #dadada; }
.tabstrip { position: relative; height: 84px; display: flex; align-items: center; padding-top: 16px; }
.tab-shape { position: absolute; left: 0; top: 0; fill: none; stroke: #b6b6b6; stroke-width: 2; }
.tab { width: 496px; height: 66px; display: flex; align-items: center; padding-left: 40px; }
.favicon { width: 32px; height: 34px; fill: none; stroke: #51677f; stroke-width: 1.3; }
.favicon, .brain { overflow: hidden; }
.tab-title { width: 362px; margin-left: 16px; font-size: 24px; color: #000; }
.tab-close { margin-left: 5px; fill: none; stroke: #111; stroke-width: 3; }
.tab-new { margin-left: 32px; fill: none; stroke: #3c3c3c; stroke-width: 4; stroke-linecap: round; }
.tab-more { margin-left: 1954px; fill: none; stroke: #3c3c3c; stroke-width: 3.4; }
.toolbar { height: 72px; display: flex; align-items: center; padding-left: 30px; }
.nav { fill: none; stroke: #606165; stroke-width: 3.4; }
.nav.off { stroke: #bababa; stroke-width: 3; }
.fwd { margin-left: 36px; }
.reload { margin-left: 36px; }
.solid { fill: #606165; stroke: none; }
.info { margin-left: 52px; fill: none; stroke: #5f6368; stroke-width: 3; }
.url { width: 1811px; margin-left: 18px; font-size: 28px; color: #000; }
.port { color: #777; }
.line { fill: none; stroke: #555; stroke-width: 2.6; }

.chat { position: relative; height: 1288px; flex: none; background: #000; overflow: hidden; }
.mesh { position: absolute; left: 0; top: 0; }
.mesh path { fill: none; stroke-width: 2.5; vector-effect: non-scaling-stroke; }
.mesh .a { stroke: rgba(200, 196, 206, .52); }
.mesh .b { stroke: rgba(180, 175, 190, .36); }
.mesh .c { stroke: rgba(150, 145, 160, .22); }
.mesh .p { stroke: rgba(112, 84, 170, .4); }
.mesh .q { stroke: rgba(85, 75, 125, .13); }
.message { position: relative; display: flex; gap: 24px; padding: 38px; color: #fff; font-family: Lato, "Open Sans", sans-serif; font-size: 46px; line-height: 60px; -webkit-text-stroke: .8px currentColor; }
.user { height: 190px; }
.bot { height: 795px; background: rgba(255, 255, 255, .225); }
.avatar { flex: none; display: grid; place-items: center; width: 90px; height: 90px; border-radius: 12px; background: #ef7c62; fill: none; stroke: #fff; stroke-width: 3; }
.bot .avatar { background: #2529f0; stroke-width: 1.7; }
.brain { width: 54px; height: 55px; }
#brain * { vector-effect: non-scaling-stroke; }
.text { margin-top: -2px; font-variant-numeric: oldstyle-nums; }
.text p { margin: 0; height: 60px; }

.prompt { position: relative; height: 154px; flex: none; display: flex; align-items: center; padding-left: 50px; background: #40414f; }
.placeholder { width: 2369px; margin-bottom: 4px; font-family: Lato, "Open Sans", sans-serif; font-size: 42px; line-height: 60px; color: #757575; -webkit-text-stroke: .6px currentColor; }
.grip { align-self: flex-end; margin-bottom: 25px; fill: none; stroke: #d0d0d0; stroke-width: 2; }
.grip .shade { stroke: #222; }
.send { margin-left: 31px; margin-bottom: 13px; fill: #fff; stroke: #000; stroke-width: 4.5; stroke-linejoin: round; stroke-linecap: round; }
```
FILE: fit.js
```js
// Condense each line horizontally so that it fills its set measure.
for (const el of document.querySelectorAll('.fit')) {
  el.style.transform = `scaleX(${el.dataset.width / el.offsetWidth})`;
}
```
